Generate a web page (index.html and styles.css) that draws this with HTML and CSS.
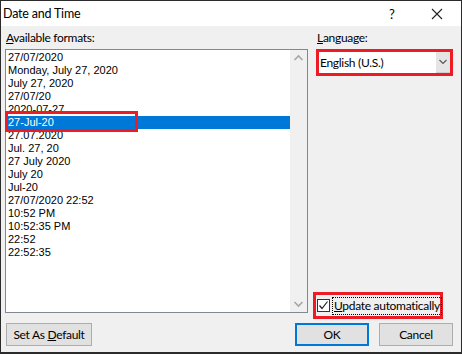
FILE: index.html
```html
<!DOCTYPE html>
<html lang="en">
<head>
    <meta charset="UTF-8">
    <title>Date and Time</title>
    <link rel="stylesheet" href="styles.css">
</head>
<body>
    <div class="dialog">
        <div class="titlebar">
            <span class="title">Date and Time</span>
            <span class="help">?</span>
            <span class="close">
                <svg width="12" height="12" viewBox="0 0 12 12"><path d="M1 1 L11 11 M11 1 L1 11" stroke="#222" stroke-width="1.1" fill="none"/></svg>
            </span>
        </div>
        <div class="content">
            <div class="col-left">
                <div class="label"><u>A</u>vailable formats:</div>
                <div class="listbox">
                    <ul class="formats">
                        <li>27/07/2020</li>
                        <li>Monday, July 27, 2020</li>
                        <li>July 27, 2020</li>
                        <li>27/07/20</li>
                        <li>2020-07-27</li>
                        <li class="selected">27-Jul-20</li>
                        <li>27.07.2020</li>
                        <li>Jul. 27, 20</li>
                        <li>27 July 2020</li>
                        <li>July 20</li>
                        <li>Jul-20</li>
                        <li>27/07/2020 22:52</li>
                        <li>10:52 PM</li>
                        <li>10:52:35 PM</li>
                        <li>22:52</li>
                        <li>22:52:35</li>
                    </ul>
                    <div class="scrollbar">
                        <svg width="17" height="17" viewBox="0 0 17 17"><path d="M4.5 10 L8.5 6 L12.5 10" stroke="#a6a6a6" stroke-width="1.6" fill="none"/></svg>
                        <svg width="17" height="17" viewBox="0 0 17 17"><path d="M4.5 7 L8.5 11 L12.5 7" stroke="#a6a6a6" stroke-width="1.6" fill="none"/></svg>
                    </div>
                </div>
                <div class="mark-row"></div>
            </div>
            <div class="col-right">
                <div class="label"><u>L</u>anguage:</div>
                <div class="combo">
                    <span class="combo-text">English (U.S.)</span>
                    <span class="combo-btn">
                        <svg width="14" height="20" viewBox="0 0 14 20"><path d="M3.5 8 L7 11.5 L10.5 8" stroke="#555" stroke-width="1.1" fill="none"/></svg>
                    </span>
                </div>
                <label class="check-row">
                    <span class="checkbox">
                        <svg width="11" height="11" viewBox="0 0 11 11"><path d="M1.5 5.5 L4 8.5 L9.5 1.5" stroke="#222" stroke-width="1.2" fill="none"/></svg>
                    </span>
                    <span class="check-text"><u>U</u>pdate automatically</span>
                </label>
            </div>
        </div>
        <div class="buttons">
            <button class="btn btn-default">Set As <u>D</u>efault</button>
            <button class="btn btn-ok">OK</button>
            <button class="btn">Cancel</button>
        </div>
    </div>
</body>
</html>
```

FILE: styles.css
```css
body {
    margin: 0;
    font-family: Lato, "Noto Sans", sans-serif;
    font-size: 12px;
    letter-spacing: -0.3px;
    color: #000;
}

.dialog {
    width: 462px;
    height: 354px;
    box-sizing: border-box;
    border: 1px solid #2b2b2b;
    border-bottom-width: 2px;
    background-color: #f0f0f0;
    display: flex;
    flex-direction: column;
}

.titlebar {
    height: 25px;
    background-color: #fff;
    display: flex;
    align-items: center;
    padding-left: 2px;
}

.title {
    flex: 1;
    font-size: 12.5px;
    letter-spacing: -0.2px;
}

.help {
    width: 12px;
    font-size: 13px;
    margin-right: 30px;
}

.close {
    display: flex;
    margin-right: 18px;
}

.content {
    display: grid;
    grid-template-columns: 303px 137px;
    column-gap: 8px;
    padding: 4px 8px 0 4px;
}

.label {
    height: 16px;
    line-height: 16px;
    margin-bottom: 3px;
    padding-left: 1px;
}

.col-left {
    position: relative;
}

.listbox {
    height: 264px;
    box-sizing: border-box;
    border: 1px solid #828790;
    background-color: #fff;
    display: flex;
}

.formats {
    flex: 1;
    list-style: none;
    margin: 0;
    padding: 1px 0 0 0;
    font-family: "Liberation Sans", Arial, sans-serif;
    font-size: 11px;
    letter-spacing: 0;
}

.formats li {
    height: 13px;
    line-height: 13px;
    padding-left: 2px;
}

.formats li.selected {
    background-color: #0078d7;
    color: #fff;
}

.scrollbar {
    width: 17px;
    background-color: #f0f0f0;
    display: flex;
    flex-direction: column;
    justify-content: space-between;
}

/* red annotation around the selected item */
.mark-row {
    position: absolute;
    left: 0;
    top: 81px;
    width: 133px;
    height: 21px;
    box-sizing: border-box;
    border: 3px solid #ed1c24;
}

.col-right {
    display: flex;
    flex-direction: column;
}

.combo {
    height: 27px;
    box-sizing: border-box;
    border: 3px solid #ed1c24;
    background-color: #fff;
    display: flex;
    align-items: stretch;
}

.combo-text {
    flex: 1;
    line-height: 21px;
    padding-left: 1px;
}

.combo-btn {
    width: 14px;
    background-color: #e5e5e5;
    border-bottom: 1px solid #cfcfcf;
    display: flex;
    align-items: center;
}

.check-row {
    margin-top: auto;
    margin-left: -3px;
    margin-right: 10px;
    margin-bottom: -6px;
    height: 27px;
    box-sizing: border-box;
    border: 3px solid #ed1c24;
    display: flex;
    align-items: center;
    padding-left: 1px;
    white-space: nowrap;
}

.checkbox {
    width: 13px;
    height: 13px;
    box-sizing: border-box;
    border: 1px solid #333;
    background-color: #fff;
    display: flex;
    align-items: center;
    justify-content: center;
}

.check-text {
    margin-left: 2px;
    border: 1px dotted #000;
    line-height: 16px;
    padding: 0 1px;
}

.buttons {
    display: flex;
    gap: 10px;
    padding: 0 8px 0 5px;
    margin-top: 10px;
}

.btn {
    width: 74px;
    height: 23px;
    font-family: inherit;
    font-size: 12px;
    letter-spacing: -0.3px;
    background-color: #e1e1e1;
    border: 1px solid #adadad;
    padding: 0;
    color: #000;
}

.btn-default {
    width: 86px;
    margin-right: auto;
}

.btn-ok {
    border: 2px solid #0078d7;
}
```
